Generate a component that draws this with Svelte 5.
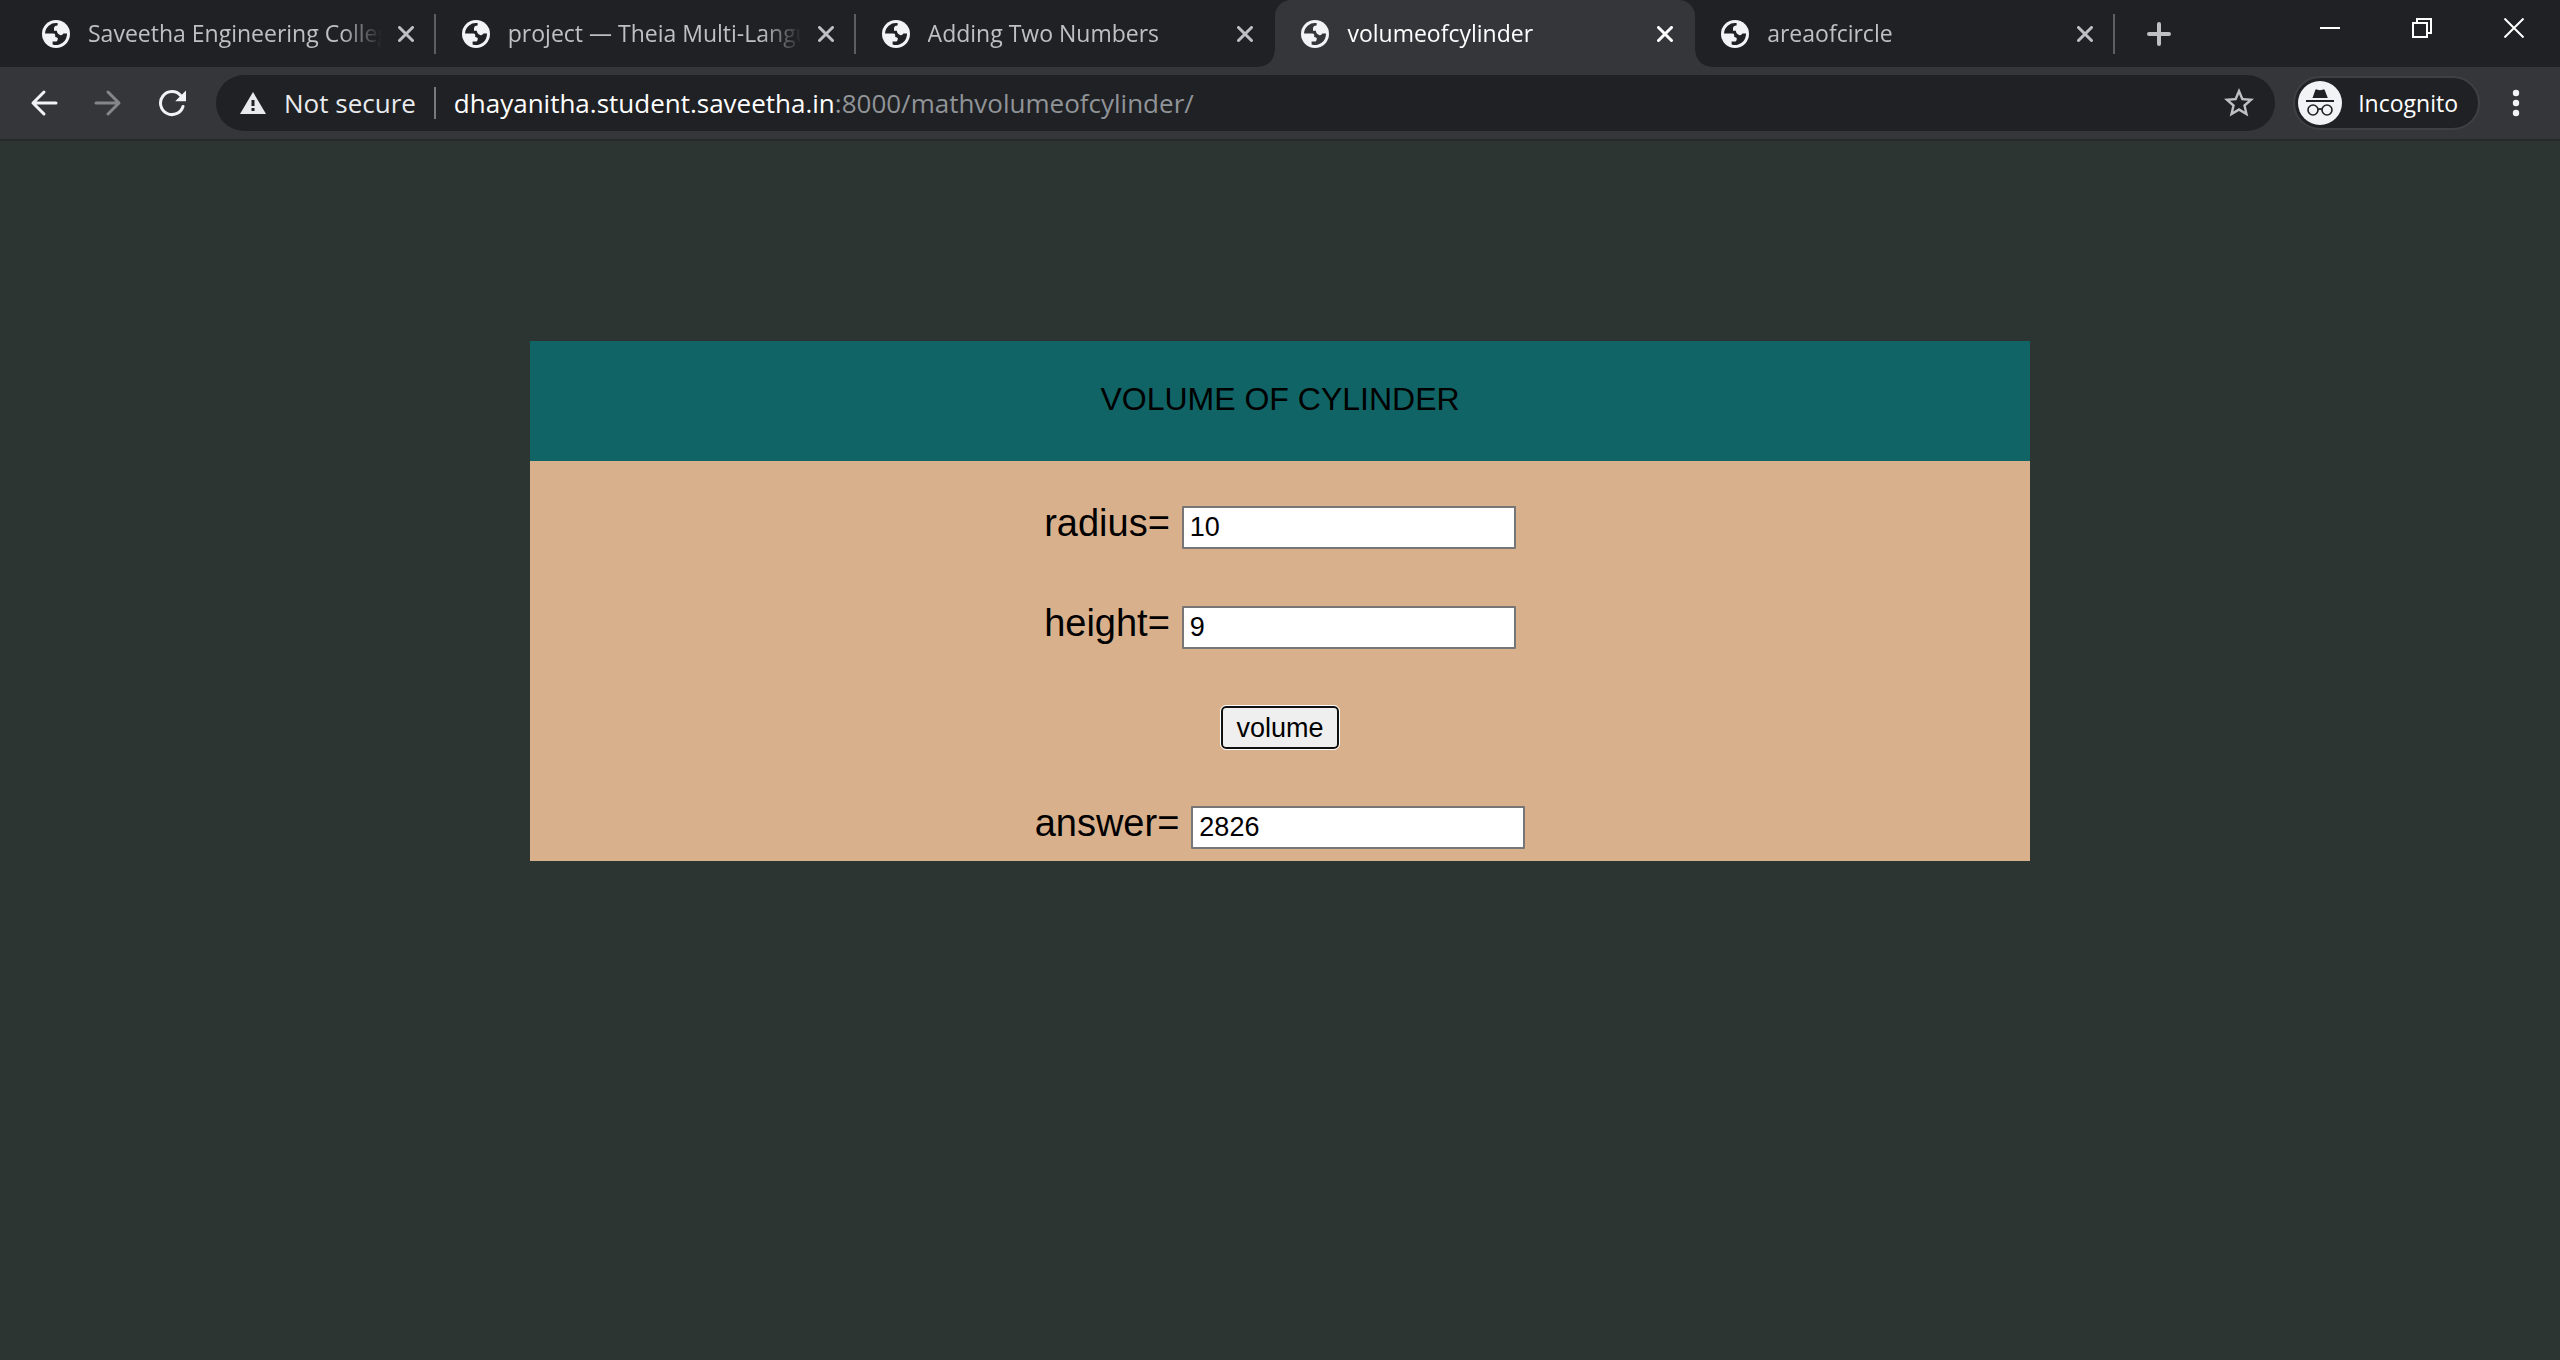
<script>
  const tabs = [
    { title: 'Saveetha Engineering College', line: true },
    { title: 'project — Theia Multi-Language', line: true },
    { title: 'Adding Two Numbers' },
    { title: 'volumeofcylinder', active: true },
    { title: 'areaofcircle', line: true }
  ];

  let radius = $state('10');
  let height = $state('9');
  let answer = $state('2826');

  function compute(event) {
    event.preventDefault();
    answer = String(Math.round(3.14 * Number(radius) ** 2 * Number(height) * 100) / 100);
  }
</script>

<div class="window">
  <header>
    <div class="strip">
      <div class="tabs">
        {#each tabs as tab}
          <div class="tab" class:active={tab.active} class:line={tab.line}>
            <svg class="globe" viewBox="0 0 28 28" aria-hidden="true">
              <circle cx="14" cy="14" r="14" fill="#f1f3f4" />
              <path class="land" d="M3 13.4A11 11 0 0 1 15.6 3.1V5.4Q12 5.6 12 8.4V10.8H14.8Q15.4 14.4 18.6 15.2Q20.4 15.4 21.4 13.6H25A11 11 0 0 1 10.6 24.5V21.6H13.6Q15.8 21.4 15.8 18.4Q15.6 17.2 13.2 17V14.8Q13 13.4 11 13.4Z" />
            </svg>
            <span class="title">{tab.title}</span>
            <button class="icon close" aria-label="Close tab">
              <svg width="16" height="16" viewBox="0 0 16 16"><path d="M1.5 1.5l13 13M14.5 1.5l-13 13" stroke="currentColor" stroke-width="3" stroke-linecap="round" /></svg>
            </button>
          </div>
        {/each}
      </div>
      <button class="icon plus" aria-label="New tab">
        <svg width="24" height="24" viewBox="0 0 24 24"><path d="M12 2v20M2 12h20" stroke="currentColor" stroke-width="4" stroke-linecap="round" /></svg>
      </button>
      <div class="controls">
        <button class="icon" aria-label="Minimize"><svg width="20" height="20" viewBox="0 0 20 20"><path d="M0 10h20" stroke="#fff" stroke-width="2" /></svg></button>
        <button class="icon" aria-label="Restore"><svg width="20" height="20" viewBox="0 0 20 20"><path d="M1 5h14v14H1zM5 5V1h14v14h-4" fill="none" stroke="#fff" stroke-width="2" /></svg></button>
        <button class="icon" aria-label="Close window"><svg width="20" height="20" viewBox="0 0 20 20"><path d="M.5.5l19 19M19.5.5l-19 19" stroke="#fff" stroke-width="2" /></svg></button>
      </div>
    </div>

    <div class="toolbar">
      <button class="icon" aria-label="Back"><svg width="28" height="28" viewBox="0 0 28 28"><path d="M14 3L3 14l11 11M3 14h23" class="stroke" /></svg></button>
      <button class="icon dim" aria-label="Forward"><svg width="28" height="28" viewBox="0 0 28 28"><path d="M14 3l11 11-11 11M25 14H2" class="stroke" /></svg></button>
      <button class="icon" aria-label="Reload"><svg width="28" height="28" viewBox="0 0 28 28"><path d="M25 17.5A11.5 11.5 0 1 1 22.6 6.4" class="stroke" /><path d="M28 1.5v10.8H17.2z" fill="currentColor" /></svg></button>
      <div class="address">
        <svg width="26" height="22" viewBox="0 0 26 22" aria-hidden="true"><path d="M13 0l13 22H0z" fill="#e8eaed" /><path d="M11.5 8h3v6h-3zM11.5 16h3v3h-3z" fill="#202124" /></svg>
        <span class="secure">Not secure</span>
        <span class="bar"></span>
        <span class="url">dhayanitha.student.saveetha.in<span class="path">:8000/mathvolumeofcylinder/</span></span>
        <button class="icon star" aria-label="Bookmark this page">
          <svg width="36" height="36" viewBox="0 0 24 24"><path fill="currentColor" d="M22 9.24l-7.19-.62L12 2 9.19 8.63 2 9.24l5.46 4.73L5.82 21 12 17.27 18.18 21l-1.63-7.03L22 9.24zM12 15.4l-3.76 2.27 1-4.28-3.32-2.88 4.38-.38L12 6.1l1.71 4.04 4.38.38-3.32 2.88 1 4.28L12 15.4z" /></svg>
        </button>
      </div>
      <button class="incognito">
        <svg width="44" height="44" viewBox="0 0 44 44" aria-hidden="true">
          <circle cx="22" cy="22" r="22" fill="#f1f3f4" />
          <path fill="#202124" d="M14.5 17L17.3 9Q17.6 8.2 18.5 8.4L22 9.3 25.5 8.4Q26.4 8.2 26.7 9L29.8 17zM8 19h28v2H8z" />
          <g fill="none" stroke="#202124" stroke-width="1.6"><circle cx="15" cy="29" r="5" /><circle cx="29" cy="29" r="5" /><path d="M20 28.6q2-1.4 4 0" /></g>
        </svg>
        <span>Incognito</span>
      </button>
      <button class="icon menu" aria-label="Menu"><svg width="8" height="28" viewBox="0 0 8 28"><g fill="currentColor"><circle cx="4" cy="4" r="3.2" /><circle cx="4" cy="14" r="3.2" /><circle cx="4" cy="24" r="3.2" /></g></svg></button>
    </div>
  </header>

  <main>
    <form class="card" onsubmit={compute}>
      <h1>VOLUME OF CYLINDER</h1>
      <div class="rows">
        <div class="row"><label for="radius">radius=</label><input id="radius" type="text" bind:value={radius} /></div>
        <div class="row"><label for="height">height=</label><input id="height" type="text" bind:value={height} /></div>
        <div class="row"><button class="submit" type="submit">volume</button></div>
        <div class="row"><label for="answer">answer=</label><input id="answer" type="text" bind:value={answer} /></div>
      </div>
    </form>
  </main>
</div>

<style>
  :global(body) { margin: 0; background: #2c3532; }
  * { box-sizing: border-box; }
  .window { min-height: 100vh; background: #2c3532; font-family: "Open Sans", "Noto Sans", sans-serif; }
  svg { display: block; flex: none; }
  .icon { display: flex; align-items: center; justify-content: center; padding: 0; border: 0; background: none; color: inherit; flex: none; }

  .strip { display: flex; height: 67px; padding-left: 16px; background: #202124; color: #bdc1c6; }
  .tabs { display: flex; flex: 0 1 2099px; min-width: 0; }
  .tab { position: relative; display: flex; align-items: center; flex: 1 1 0; min-width: 0; padding: 0 22px 0 26px; }
  .globe { width: 28px; height: 28px; }
  .land { fill: #202124; }
  .title { flex: 1; min-width: 0; margin: 0 16px 0 18px; padding-bottom: 2px; overflow: hidden; white-space: nowrap; font-size: 23px; line-height: 32px; mask-image: linear-gradient(to right, #000 calc(100% - 40px), transparent); }
  .line::after { content: ""; position: absolute; right: 0; top: 14px; width: 2px; height: 40px; background: #5b5e62; }
  .active { border-radius: 16px 16px 0 0; background: #35363a; color: #fff; }
  .active .land { fill: #35363a; }
  .active::before, .active::after { content: ""; position: absolute; bottom: 0; width: 16px; height: 16px; }
  .active::before { right: 100%; background: radial-gradient(circle at 0 0, #202124 15px, #35363a 16px); }
  .active::after { left: 100%; background: radial-gradient(circle at 100% 0, #202124 15px, #35363a 16px); }
  .plus { width: 56px; margin-left: 16px; }
  .controls { display: flex; height: 56px; margin-left: auto; }
  .controls .icon { width: 92px; }

  .toolbar { display: flex; align-items: center; height: 74px; padding: 0 36px 0 12px; border-bottom: 2px solid #272a2b; background: #35363a; color: #f1f3f4; }
  .toolbar > .icon { width: 64px; height: 56px; }
  .toolbar > .dim { color: #85868a; }
  .stroke { fill: none; stroke: currentColor; stroke-width: 3; stroke-linecap: round; stroke-linejoin: round; }
  .address { display: flex; align-items: center; flex: 1; min-width: 0; height: 56px; margin-left: 12px; padding: 0 18px 0 24px; border-radius: 28px; background: #202124; font-size: 26px; line-height: 36px; white-space: nowrap; }
  .secure { margin-left: 18px; color: #e8eaed; }
  .bar { width: 2px; height: 32px; margin: 0 18px; background: #77797c; }
  .url { flex: 1; min-width: 0; overflow: hidden; color: #fff; }
  .path { color: #909498; }
  .star { width: 36px; color: #bdc1c6; }
  .incognito { display: flex; align-items: center; gap: 16px; height: 54px; margin: 0 28px 0 18px; padding: 0 20px 0 3px; border: 2px solid #3f4044; border-radius: 27px; background: #202124; color: #fff; font-family: inherit; font-size: 23px; line-height: 32px; }
  .toolbar > .menu { width: 16px; }

  main { display: flex; justify-content: center; padding: 200px 24px 24px; font-family: "Liberation Sans", Arial, sans-serif; color: #000; }
  .card { width: 100%; max-width: 1500px; background: #d9b08c; }
  h1 { margin: 0; padding: 38px 0 42px; background: #116466; font-size: 32px; line-height: 40px; font-weight: 400; text-align: center; }
  .rows { display: grid; gap: 56px; padding: 45px 0 11px; }
  .row { display: flex; align-items: baseline; justify-content: center; gap: 12px; height: 44px; }
  label { font-size: 38px; line-height: 34px; }
  input { width: 334px; height: 43px; padding: 0 6px; border: 2px solid #767676; border-radius: 1px; background: #fff; color: #000; font-family: inherit; font-size: 27px; }
  .submit { height: 43px; padding: 0 13px; border: 2px solid #101010; border-radius: 5px; outline: 1px solid #fff; background: #efefef; color: #000; font-family: inherit; font-size: 27px; line-height: 36px; }
</style>
